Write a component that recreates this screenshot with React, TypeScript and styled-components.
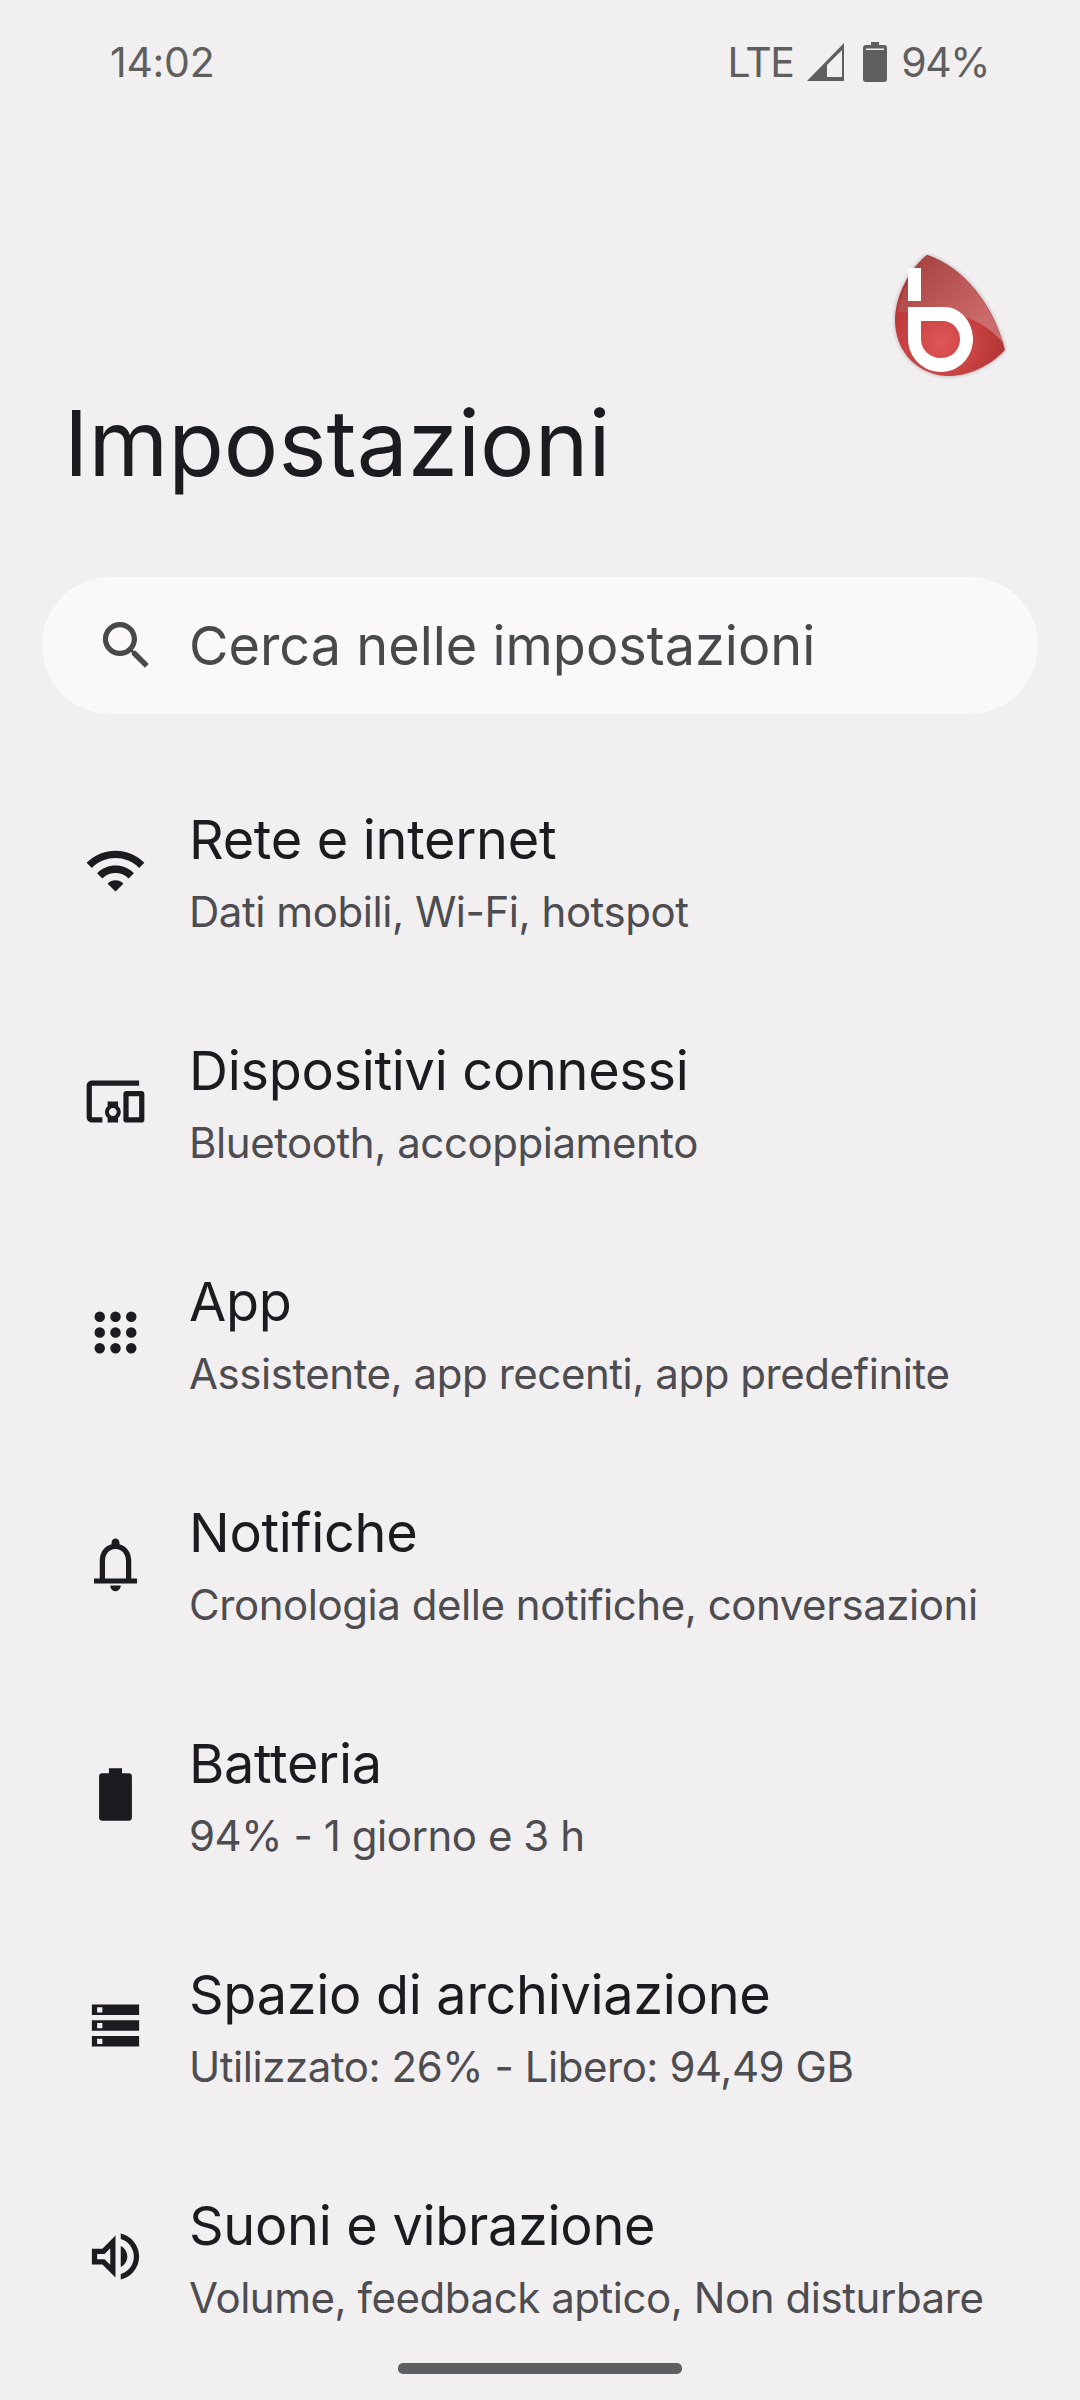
import React from "react";
import styled, { createGlobalStyle } from "styled-components";

const GlobalStyle = createGlobalStyle`
    html, body {
        margin: 0;
        padding: 0;
        background: #f2eff1;
    }
`;

const paths = {
    wifi: "M1 9l2 2c4.97-4.97 13.03-4.97 18 0l2-2C16.93 2.93 7.08 2.93 1 9zm8 8l3 3 3-3c-1.65-1.66-4.34-1.66-6 0zm-4-4l2 2c2.76-2.76 7.24-2.76 10 0l2-2C15.14 9.14 8.87 9.14 5 13z",
    devices:
        "M3 6h18V4H3c-1.1 0-2 .9-2 2v12c0 1.1.9 2 2 2h4v-2H3V6zm10 6H9v1.78c-.61.55-1 1.33-1 2.22s.39 1.67 1 2.22V20h4v-1.78c.61-.55 1-1.34 1-2.22s-.39-1.67-1-2.22V12zm-2 5.5c-.83 0-1.5-.67-1.5-1.5s.67-1.5 1.5-1.5 1.5.67 1.5 1.5-.67 1.5-1.5 1.5zM22 8h-6c-.5 0-1 .5-1 1v10c0 .5.5 1 1 1h6c.5 0 1-.5 1-1V9c0-.5-.5-1-1-1zm-1 10h-4v-8h4v8z",
    apps: "M6 4a2 2 0 1 0 0 4 2 2 0 0 0 0-4zm6 0a2 2 0 1 0 0 4 2 2 0 0 0 0-4zm6 0a2 2 0 1 0 0 4 2 2 0 0 0 0-4zM6 10a2 2 0 1 0 0 4 2 2 0 0 0 0-4zm6 0a2 2 0 1 0 0 4 2 2 0 0 0 0-4zm6 0a2 2 0 1 0 0 4 2 2 0 0 0 0-4zM6 16a2 2 0 1 0 0 4 2 2 0 0 0 0-4zm6 0a2 2 0 1 0 0 4 2 2 0 0 0 0-4zm6 0a2 2 0 1 0 0 4 2 2 0 0 0 0-4z",
    bell: "M10 20.4h4c0 1.2-.9 2.2-2 2.2s-2-1-2-2.2zM18 17.7V11c0-3.07-1.63-5.64-4.5-6.32V4c0-.83-.67-1.5-1.5-1.5s-1.5.67-1.5 1.5v.68C7.64 5.36 6 7.92 6 11v6.7H3.8v1.9h16.4v-1.9H18zm-2 0H8V11c0-2.48 1.51-4.5 4-4.5s4 2.02 4 4.5v6.7z",
    battery:
        "M14.5 3.9V2h-5v1.9H7a1.2 1.2 0 0 0-1.25 1.2v15.7A1.2 1.2 0 0 0 7 22h10a1.2 1.2 0 0 0 1.25-1.2V5.1A1.2 1.2 0 0 0 17 3.9z",
    storage:
        "M3 20h18v-4H3v4zm2-3h2v2H5v-2zM3 4v4h18V4H3zm4 3H5V5h2v2zm-4 7h18v-4H3v4zm2-3h2v2H5v-2z",
    volume: "M3 9v6h4l5 5V4L7 9H3zm7-.17v6.34L7.83 13H5v-2h2.83L10 8.83zM16.5 12c0-1.77-1.02-3.29-2.5-4.03v8.05c1.48-.73 2.5-2.25 2.5-4.02zM14 3.23v2.06c2.89.86 5 3.54 5 6.71s-2.11 5.85-5 6.71v2.06c4.01-.91 7-4.49 7-8.77 0-4.28-2.99-7.86-7-8.77z",
    search: "M15.5 14h-.79l-.28-.27C15.41 12.59 16 11.11 16 9.5 16 5.91 13.09 3 9.5 3S3 5.91 3 9.5 5.91 16 9.5 16c1.61 0 3.09-.59 4.23-1.57l.27.28v.79l5 4.99L20.49 19l-4.99-5zm-6 0C7.01 14 5 11.99 5 9.5S7.01 5 9.5 5 14 7.01 14 9.5 11.99 14 9.5 14z",
};

const rows: { icon: keyof typeof paths; title: string; subtitle: string }[] = [
    { icon: "wifi", title: "Rete e internet", subtitle: "Dati mobili, Wi-Fi, hotspot" },
    { icon: "devices", title: "Dispositivi connessi", subtitle: "Bluetooth, accoppiamento" },
    { icon: "apps", title: "App", subtitle: "Assistente, app recenti, app predefinite" },
    { icon: "bell", title: "Notifiche", subtitle: "Cronologia delle notifiche, conversazioni" },
    { icon: "battery", title: "Batteria", subtitle: "94% - 1 giorno e 3 h" },
    { icon: "storage", title: "Spazio di archiviazione", subtitle: "Utilizzato: 26% - Libero: 94,49 GB" },
    { icon: "volume", title: "Suoni e vibrazione", subtitle: "Volume, feedback aptico, Non disturbare" },
];

const logoShape = "M32 0C68 12 98 48 110 95C94 112 72 122 50 121C20 118 0 95 0 65C0 42 14 14 32 0z";

const Logo = () => (
    <svg width="122" height="134" viewBox="-6 -6 122 134">
        <defs>
            <radialGradient id="logoRed" gradientUnits="userSpaceOnUse" cx="46" cy="88" r="62">
                <stop offset="0" stopColor="#e05656" />
                <stop offset="1" stopColor="#b53434" />
            </radialGradient>
            <linearGradient id="logoGloss" gradientUnits="userSpaceOnUse" x1="22" y1="4" x2="78" y2="74">
                <stop offset="0" stopColor="#a84242" />
                <stop offset="1" stopColor="#cc6b6b" />
            </linearGradient>
            <filter id="logoBlur" x="-20%" y="-20%" width="140%" height="140%">
                <feGaussianBlur stdDeviation="2" />
            </filter>
        </defs>
        <path d={logoShape} fill="#000" opacity="0.3" filter="url(#logoBlur)" />
        <path d={logoShape} fill="url(#logoRed)" />
        <path d="M32 0C66 11 94 44 108 88C95 72 75 60 50 57H3C6 36 18 11 32 0z" fill="url(#logoGloss)" />
        <rect x="13" y="13" width="13" height="33" fill="#fff" />
        <path
            d="M13 52H50C66 52 78 68 78 84C78 102 64 117 46 117C28 117 13 102 13 84zM26 66V84C26 95 35 103 46 103C57 103 65 95 65 84C65 74 57 66 48 66z"
            fill="#fff"
            fillRule="evenodd"
        />
    </svg>
);

export default function App() {
    return (
        <Screen>
            <GlobalStyle />
            <StatusBar>
                <StatusText>14:02</StatusText>
                <StatusRight>
                    <StatusText $tight>LTE</StatusText>
                    <svg width="37" height="38" viewBox="0 0 37 38">
                        <path d="M37 0V38H0zM35 7L20 22V34H35z" fill="#5f5f5f" fillRule="evenodd" />
                    </svg>
                    <BatteryIcon viewBox="0 0 24 40">
                        <path
                            d="M8 0h8v3h5a3 3 0 0 1 3 3v31a3 3 0 0 1-3 3H3a3 3 0 0 1-3-3V6a3 3 0 0 1 3-3h5z"
                            fill="#5f5f5f"
                        />
                        <rect x="3" y="6.5" width="18" height="1.5" fill="#f2eff1" />
                    </BatteryIcon>
                    <StatusText $tight>94%</StatusText>
                </StatusRight>
            </StatusBar>
            <Header>
                <LogoWrap>
                    <Logo />
                </LogoWrap>
                <Title>Impostazioni</Title>
            </Header>
            <SearchBar>
                <SearchIcon viewBox="0 0 24 24">
                    <path d={paths.search} />
                </SearchIcon>
                <SearchText>Cerca nelle impostazioni</SearchText>
            </SearchBar>
            <List>
                {rows.map(row => (
                    <Row key={row.title}>
                        <RowIcon viewBox="0 0 24 24">
                            <path d={paths[row.icon]} />
                        </RowIcon>
                        <RowText>
                            <RowTitle>{row.title}</RowTitle>
                            <RowSubtitle>{row.subtitle}</RowSubtitle>
                        </RowText>
                    </Row>
                ))}
            </List>
            <HomeBar />
        </Screen>
    );
}

const Screen = styled.div`
    position: relative;
    width: 1080px;
    height: 2400px;
    overflow: hidden;
    background: #f2eff1;
    font-family: "Inter", "Noto Sans", sans-serif;
`;

const StatusBar = styled.div`
    height: 124px;
    padding: 0 91px 0 110px;
    box-sizing: border-box;
    display: flex;
    align-items: center;
    justify-content: space-between;
    color: #5f5f5f;
    font-size: 41px;
`;

const StatusRight = styled.div`
    display: flex;
    align-items: center;
    gap: 14px;
`;

const StatusText = styled.span<{ $tight?: boolean }>`
    letter-spacing: ${props => (props.$tight ? "-1.5px" : "-0.3px")};
`;

const BatteryIcon = styled.svg`
    width: 24px;
    height: 40px;
    margin-left: 5px;
`;

const Header = styled.div`
    height: 453px;
    padding: 0 64px;
    box-sizing: border-box;
    display: flex;
    flex-direction: column;
    justify-content: flex-end;
    position: relative;
`;

const LogoWrap = styled.div`
    position: absolute;
    top: 125px;
    right: 69px;
`;

const Title = styled.h1`
    margin: 0 0 81px;
    font-size: 91px;
    line-height: 106px;
    font-weight: 400;
    color: #1c1b1f;
`;

const SearchBar = styled.div`
    margin: 0 42px;
    height: 137px;
    border-radius: 69px;
    background: #fbf8f9;
    display: flex;
    align-items: center;
    padding-left: 53px;
    gap: 31px;
`;

const SearchIcon = styled.svg`
    width: 63px;
    height: 63px;
    fill: #49484b;
`;

const SearchText = styled.span`
    font-size: 54px;
    color: #49484b;
`;

const List = styled.div`
    margin-top: 41px;
    display: flex;
    flex-direction: column;
`;

const Row = styled.div`
    height: 231px;
    display: flex;
    align-items: center;
    padding-left: 84px;
    gap: 42px;
`;

const RowIcon = styled.svg`
    width: 63px;
    height: 63px;
    fill: #1c1b1f;
    flex: none;
`;

const RowText = styled.div`
    display: flex;
    flex-direction: column;
    gap: 13px;
    padding-top: 3px;
`;

const RowTitle = styled.span`
    font-size: 54px;
    line-height: 66px;
    letter-spacing: -0.3px;
    color: #1c1b1f;
`;

const RowSubtitle = styled.span`
    font-size: 42px;
    line-height: 52px;
    letter-spacing: -0.45px;
    color: #4d4c50;
`;

const HomeBar = styled.div`
    position: absolute;
    left: 398px;
    bottom: 26px;
    width: 284px;
    height: 11px;
    border-radius: 5px;
    background: #5f5f62;
`;
